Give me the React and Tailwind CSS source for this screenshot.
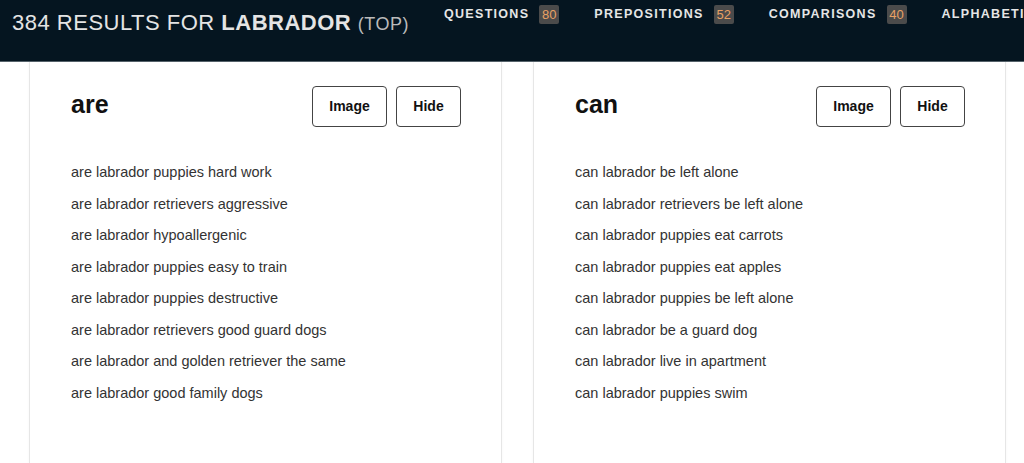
import React from "react";

const are = [
  "are labrador puppies hard work",
  "are labrador retrievers aggressive",
  "are labrador hypoallergenic",
  "are labrador puppies easy to train",
  "are labrador puppies destructive",
  "are labrador retrievers good guard dogs",
  "are labrador and golden retriever the same",
  "are labrador good family dogs",
];
const can = [
  "can labrador be left alone",
  "can labrador retrievers be left alone",
  "can labrador puppies eat carrots",
  "can labrador puppies eat apples",
  "can labrador puppies be left alone",
  "can labrador be a guard dog",
  "can labrador live in apartment",
  "can labrador puppies swim",
];

function Card({ title, items }) {
  return (
    <div className="w-[473px] shrink-0 border-x border-[#e6e6e6] bg-white pl-[41px] pr-[40px] pt-[24px] shadow-[0_0_3px_rgba(0,0,0,0.04)]">
      <div className="flex items-center justify-between">
        <h2 className="text-[25px] font-bold text-[#111] leading-none -mt-[4px]">{title}</h2>
        <div className="flex gap-[9px]">
          <button className="h-[41px] w-[75px] rounded-[4px] border border-[#444] text-[14px] font-bold text-[#111]">Image</button>
          <button className="h-[41px] w-[65px] rounded-[4px] border border-[#444] text-[14px] font-bold text-[#111]">Hide</button>
        </div>
      </div>
      <ul className="mt-[30px]">
        {items.map((t) => (
          <li key={t} className="text-[14.5px] leading-[31.5px] text-[#333]">{t}</li>
        ))}
      </ul>
    </div>
  );
}

function Nav({ label, count }) {
  return (
    <div className="flex items-center">
      <span className="text-[12.5px] font-bold tracking-[1.3px] text-[#e6e6e6]">{label}</span>
      {count && (
        <span className="ml-[10px] flex h-[19px] w-[20px] items-center justify-center rounded-[2px] bg-[#4b4b4b] text-[13px] text-[#e8a164]">{count}</span>
      )}
    </div>
  );
}

export default function App() {
  return (
    <div className="flex h-[463px] w-[1024px] flex-col overflow-hidden bg-white font-['Liberation_Sans',Arial,sans-serif]">
      <header className="flex h-[62px] shrink-0 border-b border-[#56636b] bg-[#051520]">
        <div className="pl-[12px] pt-[6px] text-[22px] tracking-[0.5px] text-[#e4e4e4] whitespace-nowrap">
          384 RESULTS FOR <span className="font-bold">LABRADOR</span>{" "}
          <span className="text-[18px] text-[#bbbbbb]">(TOP)</span>
        </div>
        <nav className="ml-[35px] flex h-[29px] items-center gap-[35px] whitespace-nowrap">
          <Nav label="QUESTIONS" count="80" />
          <Nav label="PREPOSITIONS" count="52" />
          <Nav label="COMPARISONS" count="40" />
          <Nav label="ALPHABETICAL" />
        </nav>
      </header>
      <main className="flex flex-1 gap-[31px] pl-[29px]">
        <Card title="are" items={are} />
        <Card title="can" items={can} />
      </main>
    </div>
  );
}
